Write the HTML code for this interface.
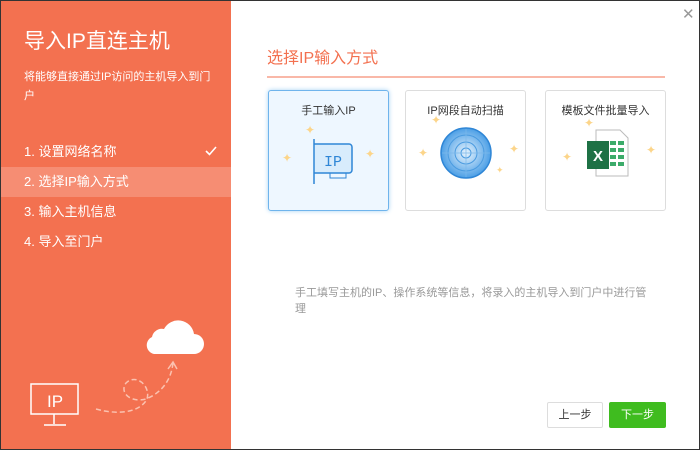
<!DOCTYPE html>
<html><head><meta charset="utf-8"><style>
*{margin:0;padding:0;box-sizing:border-box}
body{width:700px;height:450px;overflow:hidden;background:#333;font-family:"Liberation Sans","Noto Sans CJK SC",sans-serif;position:relative}
.win{position:absolute;left:1px;top:1px;width:698px;height:448px;background:#fff}
.left{position:absolute;left:0;top:0;width:230px;height:448px;background:#f37150;color:#fff}
.abs{position:absolute}
.step{position:absolute;left:0;width:230px;height:30px;line-height:30px;padding-left:23px;font-size:13px}
.card{position:absolute;top:89px;width:121px;height:121px;border:1px solid #ddd;border-radius:3px;background:#fff;text-align:center;font-size:11px;color:#333;padding-top:11px}
.star{position:absolute;color:#fcd58a;font-size:12px;line-height:1}
</style></head><body><div class="win">
<div class="left">
<div class="abs" style="left:23px;top:24px;font-size:21px">导入IP直连主机</div>
<div class="abs" style="left:23px;top:67px;font-size:11px;line-height:19px;width:190px">将能够直接通过IP访问的主机导入到门户</div>
<div class="step" style="top:136px">1. 设置网络名称<svg style="position:absolute;left:204px;top:9px" width="12" height="10"><path d="M1 5l3.5 3.5L11 1" fill="none" stroke="#fff" stroke-width="1.6"/></svg></div>
<div class="step" style="top:166px;background:#f68d73">2. 选择IP输入方式</div>
<div class="step" style="top:196px">3. 输入主机信息</div>
<div class="step" style="top:226px">4. 导入至门户</div>
<svg class="abs" style="left:0;top:300px" width="230" height="148">
<path d="M153 53 a9 9 0 0 1-2-17 a10 10 0 0 1 12-8 a16 16 0 0 1 30 5 a10 10 0 0 1 0 20z" fill="#fff"/>
<rect x="30" y="83" width="47" height="30" fill="none" stroke="#fff" stroke-width="1.5"/>
<text x="54" y="106" fill="#fff" font-size="17" text-anchor="middle" font-family="Liberation Sans">IP</text>
<path d="M53 113v10M43 124h22" stroke="#fff" stroke-width="1.5"/>
<path d="M95 108 C120 115 140 110 146 98 C150 85 135 72 125 82 C118 92 130 102 145 98 C160 92 170 80 172 62" fill="none" stroke="#fbc2b0" stroke-width="1.5" stroke-dasharray="5 3"/>
<path d="M167 68l5-7 4 7" fill="none" stroke="#fbc2b0" stroke-width="1.5"/>
</svg>
</div>
<div class="abs" style="left:681px;top:4px;color:#999;font-size:15px">✕</div>
<div class="abs" style="left:266px;top:43px;font-size:16px;color:#f37150">选择IP输入方式</div>
<div class="abs" style="left:266px;top:75px;width:398px;height:2px;background:#f9b8a8"></div>
<div class="card" style="left:267px;background:#eef7ff;border-color:#6fb4ec;box-shadow:0 0 5px #a8d3f5">手工输入IP
<div class="star" style="left:36px;top:33px">✦</div><div class="star" style="left:13px;top:61px">✦</div><div class="star" style="left:96px;top:57px">✦</div>
<svg class="abs" style="left:43px;top:48px" width="45" height="45"><path d="M2 0v45M2 5h35a3 3 0 0 1 3 3v23a3 3 0 0 1-3 3H2" fill="#d8ecfc" stroke="#2f86d6" stroke-width="1.5"/><text x="21" y="27" font-size="15" fill="#2f86d6" text-anchor="middle" font-family="Liberation Mono">IP</text><rect x="18" y="34" width="16" height="5" fill="none" stroke="#2f86d6"/></svg>
</div>
<div class="card" style="left:404px">IP网段自动扫描
<div class="star" style="left:25px;top:23px">✦</div><div class="star" style="left:12px;top:56px">✦</div><div class="star" style="left:103px;top:52px">✦</div><div class="star" style="left:90px;top:75px;font-size:9px">✦</div>
<svg class="abs" style="left:34px;top:36px" width="52" height="52"><defs><radialGradient id="g" cx="50%" cy="50%"><stop offset="0" stop-color="#e6f3fd"/><stop offset="1" stop-color="#4c9fe6"/></radialGradient></defs><circle cx="26" cy="26" r="25" fill="url(#g)" stroke="#2f86d6" stroke-width="1.5"/><circle cx="26" cy="26" r="18" fill="none" stroke="#4a9be0"/><circle cx="26" cy="26" r="11" fill="none" stroke="#4a9be0"/><circle cx="26" cy="26" r="5" fill="none" stroke="#4a9be0"/><path d="M26 2v48M2 26h48" stroke="#7bb8ea" stroke-width=".7"/></svg>
</div>
<div class="card" style="left:544px">模板文件批量导入
<div class="star" style="left:38px;top:26px">✦</div><div class="star" style="left:16px;top:60px">✦</div><div class="star" style="left:100px;top:53px">✦</div>
<svg class="abs" style="left:40px;top:38px" width="44" height="48"><path d="M10 1h24l8 8v38H10z" fill="#fff" stroke="#bbb"/><g fill="#3cab6a"><rect x="24" y="12" width="6" height="4"/><rect x="32" y="12" width="6" height="4"/><rect x="24" y="19" width="6" height="4"/><rect x="32" y="19" width="6" height="4"/><rect x="24" y="26" width="6" height="4"/><rect x="32" y="26" width="6" height="4"/><rect x="24" y="33" width="6" height="4"/><rect x="32" y="33" width="6" height="4"/></g><rect x="1" y="12" width="22" height="28" fill="#1e7145"/><text x="12" y="32" font-size="15" fill="#fff" text-anchor="middle" font-weight="bold">X</text></svg>
</div>
<div class="abs" style="left:294px;top:284px;width:420px;font-size:11px;line-height:16px;color:#999">手工填写主机的IP、操作系统等信息，将录入的主机导入到门户中进行管<br>理</div>
<div class="abs" style="left:546px;top:401px;width:56px;height:26px;border:1px solid #ddd;border-radius:2px;font-size:11px;line-height:24px;text-align:center;color:#333">上一步</div>
<div class="abs" style="left:608px;top:401px;width:57px;height:26px;background:#3fbc1f;border-radius:2px;font-size:11px;line-height:26px;text-align:center;color:#fff">下一步</div>
</div></body></html>
